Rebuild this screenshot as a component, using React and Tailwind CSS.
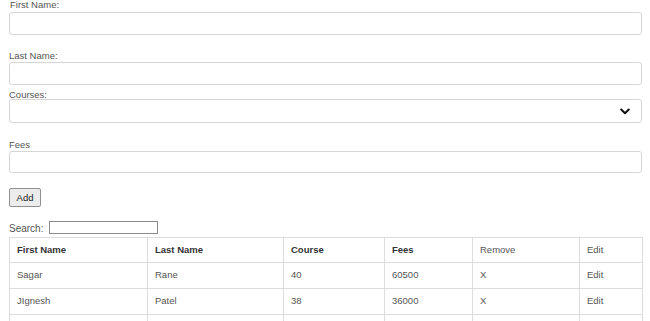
import React from "react";

const rows = [
  { f: "Sagar", l: "Rane", c: "40", fee: "60500" },
  { f: "JIgnesh", l: "Patel", c: "38", fee: "36000" },
  { f: "", l: "", c: "", fee: "" },
];

export default function App() {
  const cell = "border border-[#dddddd] pl-[7px] text-left align-middle";
  const lab = "text-[9.5px] leading-[9px]";
  return (
    <div
      className="bg-white w-[650px] pl-[9px] pr-[8px] text-[9.5px] text-[#555555]"
      style={{ fontFamily: '"Liberation Sans", Arial, sans-serif' }}
    >
      <div className="flex flex-col">
        <label className={lab + " mb-[3px] pl-px"}>First Name:</label>
        <div className="h-[23px] border border-[#d6d6d6] rounded-[3px] bg-white" />

        <label className={lab + " mt-[16px] mb-[2px]"}>Last Name:</label>
        <div className="h-[23px] border border-[#d6d6d6] rounded-[3px] bg-white" />

        <label className={lab + " mt-[5px]"}>Courses:</label>
        <div className="h-[24px] border border-[#d6d6d6] rounded-[3px] bg-white flex items-center justify-end pr-[11px]">
          <svg width="10" height="7" viewBox="0 0 10 7">
            <polyline points="1.2,1.5 5,5.2 8.8,1.5" fill="none" stroke="#111" strokeWidth="2" strokeLinecap="round" strokeLinejoin="round" />
          </svg>
        </div>

        <label className={lab + " mt-[17px] mb-[2px]"}>Fees</label>
        <div className="h-[22px] border border-[#d6d6d6] rounded-[3px] bg-white" />

        <div className="mt-[15px]">
          <button className="w-[32px] h-[19px] border border-[#8f8f8f] rounded-[2px] bg-[#ececec] text-[9.5px] text-[#222] leading-none">
            Add
          </button>
        </div>

        <div className="mt-[14px] flex items-center h-[13px]">
          <span className="text-[10px] leading-none mr-[6px] pt-[3px]">Search:</span>
          <div className="w-[109px] h-[13px] border border-[#8a8a8a] bg-white" />
        </div>

        <table className="mt-[3px] w-[633px] border-collapse table-fixed">
          <colgroup>
            <col className="w-[138px]" />
            <col className="w-[136px]" />
            <col className="w-[101px]" />
            <col className="w-[88px]" />
            <col className="w-[107px]" />
            <col className="w-[63px]" />
          </colgroup>
          <thead>
            <tr className="h-[25px]">
              <th className={cell + " font-bold text-[#333333]"}>First Name</th>
              <th className={cell + " font-bold text-[#333333]"}>Last Name</th>
              <th className={cell + " font-bold text-[#333333]"}>Course</th>
              <th className={cell + " font-bold text-[#333333]"}>Fees</th>
              <th className={cell + " font-normal"}>Remove</th>
              <th className={cell + " font-normal"}>Edit</th>
            </tr>
          </thead>
          <tbody>
            {rows.map((r, i) => (
              <tr key={i} className="h-[26px]">
                <td className={cell}>{r.f}</td>
                <td className={cell}>{r.l}</td>
                <td className={cell}>{r.c}</td>
                <td className={cell}>{r.fee}</td>
                <td className={cell}>{r.f ? "X" : ""}</td>
                <td className={cell}>{r.f ? "Edit" : ""}</td>
              </tr>
            ))}
          </tbody>
        </table>
      </div>
    </div>
  );
}
